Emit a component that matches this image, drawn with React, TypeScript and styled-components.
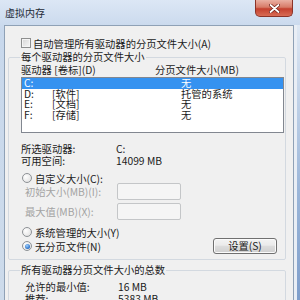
import React from 'react';
import styled, { createGlobalStyle } from 'styled-components';

const GlobalStyle = createGlobalStyle`
  html, body {
    margin: 0;
    padding: 0;
    background: #cfdcec;
  }
  body {
    font-family: "Noto Sans CJK SC", "Noto Sans", sans-serif;
  }
`;

type Drive = { letter: string; label: string; size: string };

const drives: Drive[] = [
  { letter: 'C:', label: '', size: '无' },
  { letter: 'D:', label: '[软件]', size: '托管的系统' },
  { letter: 'E:', label: '[文档]', size: '无' },
  { letter: 'F:', label: '[存储]', size: '无' },
];

const App: React.FC = () => {
  return (
    <>
      <GlobalStyle />
      <Window>
        <TitleBar>
          <Title>虚拟内存</Title>
          <CloseButton>
            <svg width="11" height="9" viewBox="0 0 11 9">
              <path d="M1.5 1 L9.5 8 M9.5 1 L1.5 8" stroke="#6b1e16" strokeWidth="3.2" strokeLinecap="round" />
              <path d="M1.5 1 L9.5 8 M9.5 1 L1.5 8" stroke="#ffffff" strokeWidth="1.8" strokeLinecap="round" />
            </svg>
          </CloseButton>
        </TitleBar>
        <Frame>
          <LeftEdge />
          <Client>
            <CheckRow>
              <CheckBox />
              <span>自动管理所有驱动器的分页文件大小(A)</span>
            </CheckRow>

            <Group>
              <GroupTitle>每个驱动器的分页文件大小</GroupTitle>
              <ListHeader>
                <span>驱动器 [卷标](D)</span>
                <span>分页文件大小(MB)</span>
              </ListHeader>
              <ListBox>
                {drives.map((d, i) => (
                  <ListRow key={d.letter} $selected={i === 0}>
                    <span>{d.letter}</span>
                    <span>{d.label}</span>
                    <span>{d.size}</span>
                  </ListRow>
                ))}
              </ListBox>

              <InfoRow $first>
                <InfoLabel>所选驱动器:</InfoLabel>
                <span>C:</span>
              </InfoRow>
              <InfoRow>
                <InfoLabel>可用空间:</InfoLabel>
                <span>14099 MB</span>
              </InfoRow>

              <RadioRow $height={10} $gap={6}>
                <Radio />
                <span>自定义大小(C):</span>
              </RadioRow>
              <FieldRow $gap={0}>
                <FieldLabel $disabled>初始大小(MB)(I):</FieldLabel>
                <TextBox />
              </FieldRow>
              <FieldRow $gap={3}>
                <FieldLabel $disabled>最大值(MB)(X):</FieldLabel>
                <TextBox />
              </FieldRow>

              <RadioRow $height={12} $gap={6}>
                <Radio />
                <span>系统管理的大小(Y)</span>
              </RadioRow>
              <RadioRow $height={16} $gap={0}>
                <Radio $checked />
                <span>无分页文件(N)</span>
                <PushButton>设置(S)</PushButton>
              </RadioRow>
            </Group>

            <Group $second>
              <GroupTitle>所有驱动器分页文件大小的总数</GroupTitle>
              <TotalRow $gap={5}>
                <TotalLabel>允许的最小值:</TotalLabel>
                <span>16 MB</span>
              </TotalRow>
              <TotalRow $gap={0}>
                <TotalLabel>推荐:</TotalLabel>
                <span>5383 MB</span>
              </TotalRow>
            </Group>
          </Client>
          <RightEdge />
        </Frame>
      </Window>
    </>
  );
};

const Window = styled.div`
  width: 300px;
  height: 300px;
  overflow: hidden;
  display: flex;
  flex-direction: column;
  background: linear-gradient(#dce7f5, #c8d8ec 30px, #cddbeb);
  font-size: 10.3px;
  color: #1b1b1b;
`;

const TitleBar = styled.div`
  height: 25px;
  flex: none;
  display: flex;
  align-items: flex-start;
`;

const Title = styled.span`
  font-size: 10px;
  line-height: 12px;
  margin: 7px 0 0 5px;
  color: #1e2a36;
`;

const CloseButton = styled.div`
  margin-left: auto;
  margin-right: 7px;
  width: 38px;
  height: 17px;
  box-sizing: border-box;
  border: 1px solid #8b3328;
  border-top: none;
  border-radius: 0 0 5px 5px;
  background: linear-gradient(#eab0a3, #d77b68 45%, #c4402e 55%, #d86c55);
  display: flex;
  align-items: center;
  justify-content: center;
`;

const Frame = styled.div`
  flex: 1;
  display: flex;
  min-height: 0;
`;

const LeftEdge = styled.div`
  width: 4px;
  flex: none;
`;

const RightEdge = styled.div`
  width: 6px;
  flex: none;
  background: linear-gradient(to right, #e9eef5 0 3px, transparent 3px),
    linear-gradient(#dfe8f3, #9bb6d9 60%, #7e9ecb);
`;

const Client = styled.div`
  flex: 1;
  min-width: 0;
  background: #f0f0f0;
  border: 1px solid #8fa1b6;
  border-bottom: none;
  overflow: hidden;
`;

const CheckRow = styled.div`
  display: flex;
  align-items: center;
  gap: 2px;
  height: 12px;
  margin-top: 11px;
  padding-left: 16px;
  white-space: nowrap;
`;

const CheckBox = styled.span`
  width: 10px;
  height: 10px;
  box-sizing: border-box;
  border: 1px solid #8e8f8f;
  background: linear-gradient(135deg, #d6d6d6, #f7f7f7);
  box-shadow: inset 0 0 0 1px #f4f4f4;
  flex: none;
`;

const Group = styled.fieldset<{ $second?: boolean }>`
  margin: ${(p) => (p.$second ? '4px' : '2px')} 7px 0 3px;
  padding: 0 1px 5px 12px;
  border: 1px solid #d3d9e0;
  border-radius: 2px;
  min-width: 0;
`;

const GroupTitle = styled.legend`
  padding: 0 1px;
  margin-left: -1px;
  line-height: 12px;
  white-space: nowrap;
`;

const ListHeader = styled.div`
  display: grid;
  grid-template-columns: 134px 1fr;
  line-height: 12px;
  margin-top: 1px;
  white-space: nowrap;
`;

const ListBox = styled.div`
  margin-top: 1px;
  height: 56px;
  box-sizing: border-box;
  border: 1px solid #828790;
  background: #ffffff;
`;

const ListRow = styled.div<{ $selected?: boolean }>`
  display: grid;
  grid-template-columns: 28px 129px 1fr;
  padding-left: 2px;
  height: 10.5px;
  line-height: 10.5px;
  white-space: nowrap;
  background: ${(p) => (p.$selected ? '#3592f0' : 'transparent')};
  color: ${(p) => (p.$selected ? '#ffffff' : '#1b1b1b')};
`;

const InfoRow = styled.div<{ $first?: boolean }>`
  display: flex;
  line-height: 12px;
  margin-top: ${(p) => (p.$first ? '10px' : '0')};
  white-space: nowrap;
`;

const InfoLabel = styled.span`
  width: 95px;
  flex: none;
`;

const RadioRow = styled.div<{ $height: number; $gap: number }>`
  display: flex;
  align-items: center;
  height: ${(p) => p.$height}px;
  margin-top: ${(p) => p.$gap}px;
  white-space: nowrap;
`;

const Radio = styled.span<{ $checked?: boolean }>`
  position: relative;
  width: 10px;
  height: 10px;
  box-sizing: border-box;
  margin: 0 3px 0 1px;
  border-radius: 50%;
  border: 1px solid #8e9296;
  background: radial-gradient(circle at 35% 35%, #ffffff, #dcdcdc);
  flex: none;

  &::after {
    content: '';
    display: ${(p) => (p.$checked ? 'block' : 'none')};
    position: absolute;
    left: 1.5px;
    top: 1.5px;
    width: 5px;
    height: 5px;
    border-radius: 50%;
    background: radial-gradient(circle at 40% 35%, #9fd1ff, #2a6fc6 70%, #1b4d94);
  }
`;

const FieldRow = styled.div<{ $gap: number }>`
  display: flex;
  align-items: center;
  height: 17px;
  margin-top: ${(p) => p.$gap}px;
  padding-left: 4px;
  white-space: nowrap;
`;

const FieldLabel = styled.span<{ $disabled?: boolean }>`
  width: 92px;
  flex: none;
  color: ${(p) => (p.$disabled ? '#a3a3a3' : '#1b1b1b')};
`;

const TextBox = styled.div`
  width: 64px;
  height: 17px;
  box-sizing: border-box;
  border: 1px solid #c4c6c8;
  border-radius: 2px;
  background: #f5f5f5;
`;

const PushButton = styled.div`
  margin-left: auto;
  margin-right: 7px;
  width: 64px;
  height: 16px;
  box-sizing: border-box;
  border: 1px solid #707070;
  border-radius: 3px;
  background: linear-gradient(#f3f3f3, #ebebeb 45%, #dddddd 50%, #cfcfcf);
  box-shadow: inset 0 0 0 1px #fbfbfb;
  display: flex;
  align-items: center;
  justify-content: center;
  line-height: 12px;
`;

const TotalRow = styled.div<{ $gap: number }>`
  display: flex;
  line-height: 12px;
  margin-top: ${(p) => p.$gap}px;
  padding-left: 4px;
  margin-left: -12px;
  padding-left: 16px;
  white-space: nowrap;
`;

const TotalLabel = styled.span`
  width: 93px;
  flex: none;
`;

export default App;
